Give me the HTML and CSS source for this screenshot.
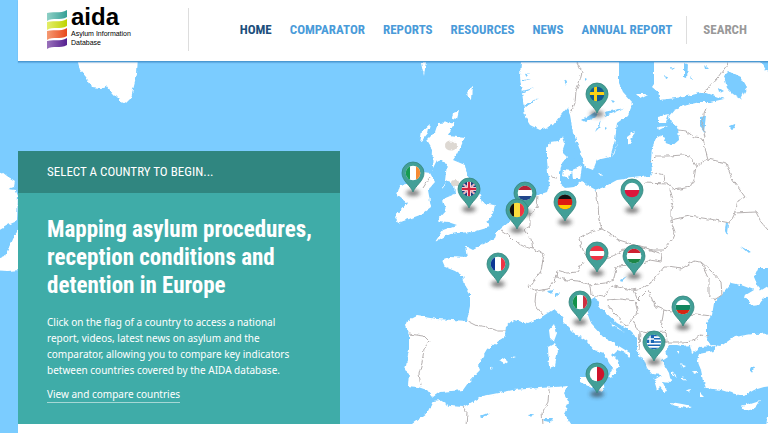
FILE: index.html
```html
<!DOCTYPE html>
<html lang="en">
<head>
<meta charset="utf-8">
<title>AIDA - Asylum Information Database</title>
<link rel="stylesheet" href="styles.css">
</head>
<body>
<header class="site-header">
  <a class="logo" href="#">
    <svg class="logo-mark" viewBox="0 0 20 40" aria-hidden="true">
      <defs>
        <linearGradient id="g1"><stop offset="0" stop-color="#8fd0c6"/><stop offset="1" stop-color="#35a096"/></linearGradient>
        <linearGradient id="g2"><stop offset="0" stop-color="#e4ee6a"/><stop offset="1" stop-color="#bfd400"/></linearGradient>
        <linearGradient id="g3"><stop offset="0" stop-color="#f59a72"/><stop offset="1" stop-color="#e8481c"/></linearGradient>
        <linearGradient id="g4"><stop offset="0" stop-color="#9a72bb"/><stop offset="1" stop-color="#552090"/></linearGradient>
      </defs>
      <path fill="url(#g1)" d="M0 3C6 1 13 4 20 0V7C13 11 6 7 0 11Z"/>
      <path fill="url(#g2)" d="M0 12C6 10 13 13 20 9V16C13 20 6 16 0 20Z"/>
      <path fill="url(#g3)" d="M0 21C6 19 13 22 20 18V26C13 30 6 26 0 30Z"/>
      <path fill="url(#g4)" d="M0 31C6 29 13 32 20 28V35C13 39 6 35 0 39Z"/>
    </svg>
    <span class="logo-text"><strong>aida</strong><span>Asylum Information<br>Database</span></span>
  </a>
  <nav class="nav" aria-label="Main">
    <a class="current" href="#">HOME</a>
    <a href="#">COMPARATOR</a>
    <a href="#">REPORTS</a>
    <a href="#">RESOURCES</a>
    <a href="#">NEWS</a>
    <a href="#">ANNUAL REPORT</a>
    <a class="search" href="#">SEARCH</a>
  </nav>
</header>

<main class="hero">
  <svg class="map" viewBox="0 62 768 362" preserveAspectRatio="xMaxYMin slice" role="group" aria-label="Map of Europe">
    <defs>
      <filter id="rough" x="0" y="0" width="100%" height="100%" color-interpolation-filters="sRGB">
        <feTurbulence type="fractalNoise" baseFrequency=".2" numOctaves="2" seed="4"/>
        <feDisplacementMap in="SourceGraphic" scale="4" xChannelSelector="R" yChannelSelector="G"/>
      </filter>
      <filter id="soft" x="-50%" y="-100%" width="200%" height="300%"><feGaussianBlur stdDeviation="2"/></filter>
      <clipPath id="disc"><circle r="7.3"/></clipPath>
      <g id="pin">
        <ellipse cy="20" rx="7" ry="3" fill="#333" opacity=".65" filter="url(#soft)"/>
        <path d="M0 19C-2 13-11 8-11 0A11 11 0 0 1 11 0C11 8 2 13 0 19Z" fill="#429f97" stroke="#33857e" stroke-width=".8"/>
      </g>
    </defs>

    <g filter="url(#rough)">
      <rect x="-20" y="40" width="810" height="400" fill="#7bccff"/>
      <g fill="#fff">
        <!-- Greenland tip and Newfoundland -->
        <path d="M76 55H138L137 74L133 90L131 98L126 103L119 100L113 94L107 86L100 88L92 87L86 77L80 70Z"/>
        <path d="M-9 170L2 172L7 176L15 181L14 187L8 189L16 190L18 195L17 221L8 225L-9 235ZM-9 262L5 256L14 236L20 228V270L8 271L-9 270Z"/>
        <!-- Scandinavia -->
        <path d="M521 50V62L520 77L522 93L525 117L530 125L540 130L553 125L561 115L567 108L570 115L573 132L580 150L585 167L593 170L597 160L610 157L615 140L617 123L628 115L633 103L623 92L619 83V50Z"/>
        <!-- Continental Europe -->
        <path d="M654 50V84L652 87L658 92L660 100L684 97L704 92L724 99L711 102L700 102L687 105L674 110L669 116L671 122L678 128L679 140L672 146L666 142L662 135L656 138L652 148L651 160L652 172L650 176L641 177L632 178L617 180L604 187L596 190L587 185L582 181L574 187L566 188L560 183V172L562 163L567 157L562 152L565 143L563 137L557 142L550 143L547 148V160L548 173L550 183L547 192L538 195L526 198L517 207L508 223L497 232L495 238L482 245L473 250L465 246L467 258L450 257L442 260L445 267L455 271L463 276L465 285L470 293V306L467 321L453 320L437 319L417 316L407 321L405 326L409 335V350L405 370L409 373L408 386L418 387L427 390L433 397L440 392L463 390L468 383L480 370L478 365L487 350L505 336L506 326L513 320L528 323L540 318L554 309L561 315L564 323L574 333L587 341L594 350L604 353L609 363L613 368L609 376L612 378L619 366L617 360L612 355L617 350L626 353L630 358V353L614 343L607 340L591 323L586 310L587 301L596 297L599 305L604 311L617 323L629 330L637 338V350L644 360L647 368L652 374L662 375L654 380L657 390L660 387L664 392L667 391L662 381L671 382L669 373L662 361L668 357L666 350L670 345L677 345L682 346L690 345L692 353L701 347L711 346L706 336V323L712 315L714 303L721 295L731 283L741 285L754 290L744 296L752 306L759 305L764 298L790 297V50Z"/>
        <!-- Anatolia and Cyprus -->
        <path d="M711 345L721 346L734 337L752 334L790 333V384L764 387L754 390L744 396L731 393L721 390L706 388L703 380L701 370L697 360L699 354L714 351Z"/>
        <path d="M741 406L760 400L754 409L745 411Z"/>
        <path d="M790 405L768 416L763 440H790Z"/>
        <!-- North Africa -->
        <path d="M398 440L412 424L427 413L433 401L440 400L450 406L463 407L483 396L513 390L540 388L569 386L564 393L569 403L564 413L573 427V440Z"/>
        <!-- Great Britain, Ireland and nearby islands -->
        <path d="M438 123L455 122L448 135L465 137L458 153L453 160L465 165L468 177L478 188L482 203L495 205L492 217L486 221L490 227L473 232L457 233L447 235L435 242L443 230L457 225L448 222L437 221L446 211L443 199L455 194L454 184L445 181L447 163L437 160L432 170L433 150L427 140L435 132Z"/>
        <path d="M423 172L430 173L435 182L428 190L431 207L420 215L398 223L395 217L407 203L397 195L400 185L413 183Z"/>
        <path d="M422 131L430 124L428 133L420 143ZM453 113L459 111L457 119L452 118ZM468 90L473 86L472 100L466 94ZM421 62H426L424 76ZM442 187L446 183L443 189Z"/>
        <!-- Danish and Baltic islands -->
        <path d="M564 170L571 171L569 178L563 176ZM572 170L582 166L580 179L573 179ZM598 173L603 174L601 176ZM627 137L635 131L631 141L627 146ZM612 157L618 141L614 154ZM658 117L669 114L666 122L658 122ZM636 94L648 94L640 98ZM657 127L667 126L659 130Z"/>
        <!-- Mediterranean islands -->
        <path d="M580 377L597 377L608 374L604 383L602 392L590 386L580 381ZM548 347L555 343L558 350L555 366L549 368ZM549 330L554 324L557 333L554 341L550 338ZM499 361L505 358L508 361L504 364ZM511 357L515 358L512 359ZM490 369L493 367L491 370ZM671 402L682 404L692 406L685 408L672 405ZM680 364L686 366L683 368ZM692 371L698 371L693 374ZM682 376L686 381L682 379ZM672 370L677 378L672 374ZM686 390L691 389L689 393ZM676 351L679 351L677 354ZM700 393L704 397L700 397ZM638 351L642 359L638 356ZM610 322L624 332L613 326Z"/>
      </g>
      <!-- Lakes and inland seas -->
      <g fill="#7bccff">
        <path d="M724 76L729 71L741 77L747 87L741 99L733 94L727 88ZM700 116L706 115L704 133L700 127ZM582 120L595 112L597 116L586 122ZM595 132L601 119L599 128ZM605 112L624 108L606 116ZM730 126L735 124L736 128L731 129ZM759 60H775V75L765 70ZM684 63L688 65L687 78L684 77ZM699 348L714 346L715 350L704 352ZM754 277L758 268L769 268L790 268V293L768 286L760 291ZM740 246L751 252L748 253ZM749 367L754 368L752 373ZM620 280L627 276L621 282ZM548 291L554 290L551 294ZM480 416L490 412L483 418ZM528 415L534 414L531 418ZM543 418L553 418L551 423L544 422ZM726 222L728 223L727 234L725 230Z"/>
        <path d="M523 80L531 79L523 82ZM522 91L534 88L523 93ZM524 105L538 98L526 107ZM525 74L530 72L526 76ZM564 80L567 82L566 85ZM585 78L587 79L585 81ZM610 100L614 101L612 103ZM605 127L607 128L605 130ZM573 158L577 161L574 162ZM691 75L693 80L692 81ZM671 67L675 68L672 70ZM704 65L708 69L705 69ZM664 75L668 77L665 78ZM718 88L723 91L719 93ZM555 294L560 292L556 298Z"/>
      </g>
      <!-- Highlands -->
      <g fill="#ddd8d2"><ellipse cx="451" cy="146" rx="6" ry="4.500"/><ellipse cx="455" cy="183" rx="3" ry="3"/></g>
      <!-- Borders -->
      <g class="borders">
        <path d="M577 62L582 72L579 83L576 91L575 103L571 113"/>
        <path d="M731 60L718 77L704 92M706 108L702 121L705 138M678 130L686 131L694 137L703 138L705 148L708 159L696 166L690 156L683 155L668 156L656 156L650 162M652 172L664 175L665 182M644 183L668 184L675 190L690 187L694 179L696 166M708 159L726 163L732 179L745 197L738 201L735 213L730 223L715 220L690 216L675 219L671 221L671 211L673 200L670 189M734 213L756 212L761 222L768 230M671 221L675 232L672 239L664 248"/>
        <path d="M596 190L598 204L599 220L602 229L591 232L579 239L583 250L589 261M602 229L612 235L619 240L632 244L649 250L664 250M589 261L603 258L613 256L624 250L634 249L646 248L662 254L661 262L650 260L639 264L619 266L614 272"/>
        <path d="M583 262L577 272L567 273L557 270L556 277L567 280L579 281L590 285L605 283L614 279L616 268M590 285L591 295L604 297L611 285L618 287L632 290L643 288L652 282L664 267L668 267L681 269L694 261L701 262L711 271L721 282L722 295L714 300M701 262L709 279L709 295L716 300"/>
        <path d="M607 300L620 299L635 301L638 313L632 318L627 327L614 313L608 305M634 290L638 300L648 290L655 306L664 310L661 327L666 332L648 333L638 331L633 320M664 310L682 315L696 314L711 316M666 342L682 342L693 341L700 335L708 336M666 332L667 342L654 343M640 331L639 350"/>
        <path d="M538 196L537 208L530 213L530 226L524 230L531 240L533 249L544 254L541 271L529 287L536 291L535 302L539 310L543 315M501 230L510 236L517 243L525 247L533 249M536 291L548 289L554 281L556 275"/>
        <path d="M467 321L475 325L487 327L498 331L506 331M409 334L424 336L429 341L424 349L422 363L419 374L421 386M463 407L467 413L466 426M549 389L548 402L542 413L543 425M423 188L430 177M550 177L557 178"/>
      </g>
    </g>

    <a href="#" aria-label="Sweden"><g transform="translate(597 94)"><use href="#pin"/><g clip-path="url(#disc)"><path fill="#12598f" d="M-8-8H8V8H-8Z"/><path fill="#fbd116" d="M-3-8H0V-2H8V1H0V8H-3V1H-8V-2H-3Z"/></g></g></a>
    <a href="#" aria-label="Ireland"><g transform="translate(413 173)"><use href="#pin"/><g clip-path="url(#disc)"><path fill="#fff" d="M-8-8H8V8H-8Z"/><path fill="#169b52" d="M-8-8H-3V8H-8Z"/><path fill="#f58a33" d="M3-8H8V8H3Z"/></g></g></a>
    <a href="#" aria-label="United Kingdom"><g transform="translate(469 189)"><use href="#pin"/><g clip-path="url(#disc)"><path fill="#21367c" d="M-8-8H8V8H-8Z"/><path stroke="#fff" stroke-width="2" d="M-8-7L8 7M8-7L-8 7"/><path stroke="#d0243f" stroke-width=".7" d="M-8-7L8 7M8-7L-8 7"/><path stroke="#fff" stroke-width="4" d="M0-8V8M-8 0H8"/><path stroke="#d0243f" stroke-width="2.400" d="M0-8V8M-8 0H8"/></g></g></a>
    <a href="#" aria-label="Netherlands"><g transform="translate(525 193)"><use href="#pin"/><g clip-path="url(#disc)"><path fill="#fff" d="M-8-8H8V8H-8Z"/><path fill="#b52035" d="M-8-8H8V-3H-8Z"/><path fill="#21468b" d="M-8 3H8V8H-8Z"/></g></g></a>
    <a href="#" aria-label="Belgium"><g transform="translate(517 210)"><use href="#pin"/><g clip-path="url(#disc)"><path fill="#fbdd3c" d="M-8-8H8V8H-8Z"/><path fill="#111" d="M-8-8H-3V8H-8Z"/><path fill="#ee3344" d="M3-8H8V8H3Z"/></g></g></a>
    <a href="#" aria-label="Germany"><g transform="translate(565 202)"><use href="#pin"/><g clip-path="url(#disc)"><path fill="#dd1a12" d="M-8-8H8V8H-8Z"/><path fill="#111" d="M-8-8H8V-3H-8Z"/><path fill="#fc0" d="M-8 3H8V8H-8Z"/></g></g></a>
    <a href="#" aria-label="Poland"><g transform="translate(632 190)"><use href="#pin"/><g clip-path="url(#disc)"><path fill="#fff" d="M-8-8H8V0H-8Z"/><path fill="#dc143c" d="M-8 0H8V8H-8Z"/></g></g></a>
    <a href="#" aria-label="France"><g transform="translate(498 264)"><use href="#pin"/><g clip-path="url(#disc)"><path fill="#fff" d="M-8-8H8V8H-8Z"/><path fill="#0b3694" d="M-8-8H-3V8H-8Z"/><path fill="#ee3344" d="M3-8H8V8H3Z"/></g></g></a>
    <a href="#" aria-label="Austria"><g transform="translate(597 253)"><use href="#pin"/><g clip-path="url(#disc)"><path fill="#ee3344" d="M-8-8H8V8H-8Z"/><path fill="#fff" d="M-8-2H8V3H-8Z"/></g></g></a>
    <a href="#" aria-label="Hungary"><g transform="translate(634 256)"><use href="#pin"/><g clip-path="url(#disc)"><path fill="#fff" d="M-8-8H8V8H-8Z"/><path fill="#ce2030" d="M-8-8H8V-3H-8Z"/><path fill="#1d8648" d="M-8 3H8V8H-8Z"/></g></g></a>
    <a href="#" aria-label="Italy"><g transform="translate(580 302)"><use href="#pin"/><g clip-path="url(#disc)"><path fill="#fff" d="M-8-8H8V8H-8Z"/><path fill="#12924a" d="M-8-8H-3V8H-8Z"/><path fill="#ce3040" d="M3-8H8V8H3Z"/></g></g></a>
    <a href="#" aria-label="Bulgaria"><g transform="translate(683 307)"><use href="#pin"/><g clip-path="url(#disc)"><path fill="#fff" d="M-8-8H8V8H-8Z"/><path fill="#12865e" d="M-8-2H8V3H-8Z"/><path fill="#d62612" d="M-8 3H8V8H-8Z"/></g></g></a>
    <a href="#" aria-label="Greece"><g transform="translate(654 342)"><use href="#pin"/><g clip-path="url(#disc)"><path fill="#fff" d="M-8-8H8V8H-8Z"/><path stroke="#1866b5" stroke-width="1.600" d="M-8-6.500H8M-8-3.200H8M-8 0H8M-8 3.200H8M-8 6.500H8"/><path fill="#1866b5" d="M-8-8H0V1H-8Z"/><path stroke="#fff" stroke-width="1.500" d="M-4-8V1M-8-3H0"/></g></g></a>
    <a href="#" aria-label="Malta"><g transform="translate(597 374)"><use href="#pin"/><g clip-path="url(#disc)"><path fill="#fff" d="M-8-8H0V8H-8Z"/><path fill="#cf142b" d="M0-8H8V8H0Z"/></g></g></a>
  </svg>

  <section class="panel">
    <p class="panel-title">SELECT A COUNTRY TO BEGIN...</p>
    <div class="panel-body">
      <h1>Mapping asylum procedures, reception conditions and detention in Europe</h1>
      <p>Click on the flag of a country to access a national report, videos, latest news on asylum and the comparator, allowing you to compare key indicators between countries covered by the AIDA database.</p>
      <a href="#">View and compare countries</a>
    </div>
  </section>
</main>
<div class="page-content"></div>
</body>
</html>
```
FILE: styles.css
```css
* {
  box-sizing: border-box;
}

body {
  margin: 0;
  min-height: 100vh;
  display: flex;
  flex-direction: column;
  background: #7bccff;
  font-family: "Noto Sans", sans-serif;
}

a {
  color: inherit;
  text-decoration: none;
}

.site-header,
.nav,
.panel-title,
h1 {
  font-family: "Roboto Condensed", "Liberation Sans Narrow", Roboto, sans-serif;
}

.site-header {
  position: relative;
  z-index: 1;
  display: flex;
  align-items: center;
  justify-content: space-between;
  height: 62px;
  margin-left: 18px;
  padding: 0 21px 2px 29px;
  background: #fff;
  border-bottom: 1px solid #4a99d3;
  box-shadow: 0 1px 1px rgba(60, 130, 190, 0.4);
}

.logo {
  display: flex;
  gap: 4px;
  height: 43px;
  width: 142px;
  padding-top: 2px;
  border-right: 1px solid #ddd;
  color: #000;
  font-family: "Liberation Sans", sans-serif;
}

.logo-mark {
  width: 20px;
  height: 40px;
}

.logo-text {
  display: flex;
  flex-direction: column;
  font-size: 7px;
  line-height: 9px;
  white-space: nowrap;
}

.logo-text strong {
  margin-top: -5px;
  font-size: 24px;
  line-height: 24px;
}

.nav {
  display: flex;
  align-items: center;
  gap: 18px;
  color: #4a9bd9;
  font-size: 13px;
  font-weight: 700;
  line-height: 28px;
  white-space: nowrap;
}

.nav .current {
  color: #1c4f7c;
}

.nav .search {
  margin-left: -4px;
  padding-left: 16px;
  border-left: 1px solid #ddd;
  color: #999;
}

.hero {
  position: relative;
  padding: 89px 0 0 18px;
}

.map {
  position: absolute;
  inset: 0;
  width: 100%;
  height: 100%;
}

.borders {
  fill: none;
  stroke: #b5b0b0;
  stroke-width: 1;
}

.panel {
  position: relative;
  width: 322px;
  background: #3faca8;
  color: #fff;
}

.panel-title {
  margin: 0;
  padding: 0 29px;
  background: #308680;
  font-size: 13px;
  line-height: 42px;
}

.panel-body {
  padding: 23px 24px 21px 29px;
  font-size: 10px;
  line-height: 16px;
}

h1 {
  margin: 0 0 14px;
  font-size: 23px;
  font-weight: 700;
  line-height: 28px;
}

.panel-body p {
  max-width: 256px;
  margin: 0 0 9px;
}

.panel-body a {
  display: block;
  width: fit-content;
  line-height: 15px;
  border-bottom: 1px solid #a5d8d5;
}

.page-content {
  flex: 1;
  margin-left: 18px;
  background: #fff;
}
```
